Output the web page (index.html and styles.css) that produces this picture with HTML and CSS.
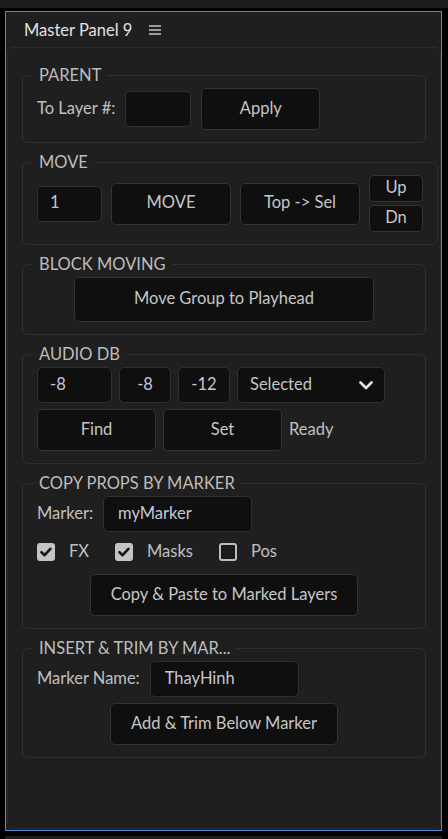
FILE: index.html
```html
<!DOCTYPE html>
<html lang="en">
<head>
<meta charset="utf-8">
<title>Master Panel 9</title>
<link rel="stylesheet" href="styles.css">
</head>
<body>
<div class="topbar"></div>
<div class="frame">
  <div class="header">
    <span class="title">Master Panel 9</span>
    <svg class="menu" width="12" height="10" viewBox="0 0 12 10"><rect x="0" y="0" width="12" height="2" fill="#9a9a9a"/><rect x="0" y="4" width="12" height="2" fill="#9a9a9a"/><rect x="0" y="8" width="12" height="2" fill="#9a9a9a"/></svg>
  </div>
  <div class="panel">
    <fieldset class="group">
      <legend>PARENT</legend>
      <div class="row">
        <span class="label">To Layer #:</span>
        <input class="field w66" type="text" value="">
        <button class="btn w119">Apply</button>
      </div>
    </fieldset>

    <fieldset class="group">
      <legend>MOVE</legend>
      <div class="row move-row">
        <input class="field w65" type="text" value="1">
        <button class="btn w120">MOVE</button>
        <button class="btn w120">Top -&gt; Sel</button>
        <div class="updn">
          <button class="btn small">Up</button>
          <button class="btn small">Dn</button>
        </div>
      </div>
    </fieldset>

    <fieldset class="group">
      <legend>BLOCK MOVING</legend>
      <div class="center">
        <button class="btn wide">Move Group to Playhead</button>
      </div>
    </fieldset>

    <fieldset class="group">
      <legend>AUDIO DB</legend>
      <div class="row tight">
        <input class="field w75" type="text" value="-8">
        <input class="field w52 mid" type="text" value="-8">
        <input class="field w52 mid" type="text" value="-12">
        <div class="select">
          <span>Selected</span>
          <svg width="14" height="9" viewBox="0 0 14 9"><path d="M1.5 1.5 L7 7 L12.5 1.5" fill="none" stroke="#e4e4e4" stroke-width="2.6" stroke-linecap="round" stroke-linejoin="round"/></svg>
        </div>
      </div>
      <div class="row tight row2">
        <button class="btn w119">Find</button>
        <button class="btn w119">Set</button>
        <span class="label">Ready</span>
      </div>
    </fieldset>

    <fieldset class="group">
      <legend>COPY PROPS BY MARKER</legend>
      <div class="row">
        <span class="label">Marker:</span>
        <input class="field w149" type="text" value="myMarker">
      </div>
      <div class="checks">
        <span class="check">
          <span class="box on"><svg width="18" height="18" viewBox="0 0 18 18"><path d="M4.5 9.2 L7.6 12.2 L13.4 5.8" fill="none" stroke="#161616" stroke-width="2.6" stroke-linecap="round" stroke-linejoin="round"/></svg></span>
          <span class="label">FX</span>
        </span>
        <span class="check">
          <span class="box on"><svg width="18" height="18" viewBox="0 0 18 18"><path d="M4.5 9.2 L7.6 12.2 L13.4 5.8" fill="none" stroke="#161616" stroke-width="2.6" stroke-linecap="round" stroke-linejoin="round"/></svg></span>
          <span class="label">Masks</span>
        </span>
        <span class="check">
          <span class="box off"></span>
          <span class="label">Pos</span>
        </span>
      </div>
      <div class="center copy-btn">
        <button class="btn auto">Copy &amp; Paste to Marked Layers</button>
      </div>
    </fieldset>

    <fieldset class="group">
      <legend>INSERT &amp; TRIM BY MAR...</legend>
      <div class="row">
        <span class="label">Marker Name:</span>
        <input class="field w149" type="text" value="ThayHinh">
      </div>
      <div class="center insert-btn">
        <button class="btn auto">Add &amp; Trim Below Marker</button>
      </div>
    </fieldset>
  </div>
</div>
<div class="bottombar"></div>
</body>
</html>
```

FILE: styles.css
```css
html, body {
  margin: 0;
  padding: 0;
  background: #000;
  height: 839px;
  overflow: hidden;
}
body {
  font-family: Lato, "Open Sans", sans-serif;
  font-size: 16.5px;
  color: #c2c2c2;
}
.topbar {
  height: 8px;
  background: #1d1d1d;
}
.frame {
  margin: 3px 0 0 5px;
  width: 437px;
  height: 820px;
  box-sizing: border-box;
  border: 1px solid #4a8fdc;
  background: #1f1f1f;
  display: flex;
  flex-direction: column;
  padding: 0 0 1px 1px;
}
.bottombar {
  margin: 5px 0 0 5px;
  width: 437px;
  height: 3px;
  background: #1d1d1d;
}
.header {
  height: 35px;
  flex: none;
  display: flex;
  align-items: center;
  padding-left: 17px;
  gap: 17px;
}
.title {
  color: #e2e2e2;
  font-size: 16.5px;
}
.menu {
  display: block;
}
.panel {
  flex: 1;
  border: 1px solid #2b2b2b;
  border-radius: 6px;
  padding: 18px 14px 0 14px;
  min-height: 0;
}
.group {
  border: 1px solid #303030;
  border-radius: 6px;
  padding: 4px 14px 12px 14px;
  margin: 0 0 10px 0;
}
.group legend {
  margin-left: -4px;
  padding: 0 6px;
  line-height: 18px;
  font-size: 16.5px;
  color: #bdbdbd;
}
.row {
  display: flex;
  align-items: center;
  gap: 10px;
}
.move-row {
  gap: 9px;
}
.tight {
  gap: 7px;
}
.row2 {
  margin-top: 6px;
}
.label {
  color: #c0c0c0;
  white-space: nowrap;
}
.row > .label {
  padding-bottom: 3px;
}
.field {
  box-sizing: border-box;
  height: 36px;
  background: #0f0f0f;
  border: 1px solid #2f2f2f;
  border-radius: 5px;
  color: #c4c8d2;
  font-family: inherit;
  font-size: 16.5px;
  padding: 0 12px 3px 12px;
  outline: none;
  margin: 0;
  flex: none;
}
.field.mid {
  text-align: center;
  padding: 0 0 3px 0;
}
.w65 { width: 65px; }
.w66 { width: 66px; }
.w75 { width: 75px; }
.w52 { width: 52px; }
.w149 { width: 149px; padding-left: 14px; }
.btn {
  box-sizing: border-box;
  height: 42px;
  background: #0f0f0f;
  border: 1px solid #333;
  border-radius: 5px;
  color: #c6c6c6;
  font-family: inherit;
  font-size: 16.5px;
  margin: 0;
  padding: 0 0 3px 0;
  flex: none;
}
.w119 { width: 119px; }
.w120 { width: 120px; }
.updn {
  display: flex;
  flex-direction: column;
  gap: 3px;
  flex: none;
}
.btn.small {
  width: 54px;
  height: 27px;
}
.center {
  display: flex;
  justify-content: center;
}
.btn.wide {
  width: 300px;
  height: 45px;
}
.btn.auto {
  padding: 0 20px 3px 20px;
}
.select {
  box-sizing: border-box;
  width: 148px;
  height: 36px;
  background: #0f0f0f;
  border: 1px solid #2f2f2f;
  border-radius: 5px;
  display: flex;
  align-items: center;
  justify-content: space-between;
  padding: 0 11px 3px 12px;
  color: #c4c4c4;
  flex: none;
}
.select svg {
  display: block;
  margin-top: 3px;
}
.checks {
  display: flex;
  align-items: center;
  height: 24px;
  margin-top: 8px;
  gap: 26px;
  padding-left: 0;
}
.check {
  display: flex;
  align-items: center;
  gap: 14px;
}
.check .label {
  padding-bottom: 2px;
}
.box {
  box-sizing: border-box;
  width: 18px;
  height: 18px;
  border-radius: 3px;
  display: block;
}
.box svg {
  display: block;
}
.box.on {
  background: #c4c4c4;
}
.box.off {
  border: 2px solid #bcbcbc;
  background: #1a1a1a;
}
.copy-btn {
  margin-top: 10px;
}
.insert-btn {
  margin-top: 6px;
}
```
